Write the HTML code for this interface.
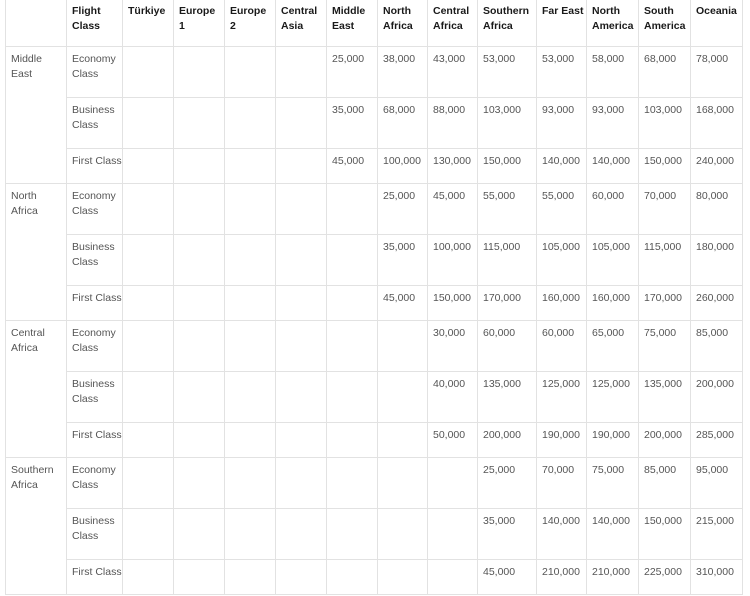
<!DOCTYPE html>
<html><head><style>
body{margin:0;background:#fff;width:750px;height:596px;overflow:hidden;}
table{position:absolute;left:5px;top:-1px;border-collapse:collapse;table-layout:fixed;font-family:"Liberation Sans",sans-serif;font-size:10.5px;line-height:15px;color:#555;}
td,th{border:1px solid #e2e2e2;vertical-align:top;text-align:left;padding:5px 0 0 5px;overflow:hidden;white-space:nowrap;}
th{color:#1a1a1a;font-weight:bold;height:42px;padding-top:4px;}
tr.r1 td,tr.r2 td{height:45px}
tr.r3 td{height:29px}
td.rg{height:auto}
</style></head><body>
<table>
<colgroup><col style="width:61px"><col style="width:56px"><col style="width:51px"><col style="width:51px"><col style="width:51px"><col style="width:51px"><col style="width:51px"><col style="width:50px"><col style="width:50px"><col style="width:59px"><col style="width:50px"><col style="width:52px"><col style="width:52px"><col style="width:52px"></colgroup>
<tr><th></th><th>Flight<br>Class</th><th>Türkiye</th><th>Europe<br>1</th><th>Europe<br>2</th><th>Central<br>Asia</th><th>Middle<br>East</th><th>North<br>Africa</th><th>Central<br>Africa</th><th>Southern<br>Africa</th><th>Far East</th><th>North<br>America</th><th>South<br>America</th><th>Oceania</th></tr>
<tr class="r1"><td rowspan="3" class="rg">Middle<br>East</td><td>Economy<br>Class</td><td></td><td></td><td></td><td></td><td>25,000</td><td>38,000</td><td>43,000</td><td>53,000</td><td>53,000</td><td>58,000</td><td>68,000</td><td>78,000</td></tr>
<tr class="r2"><td>Business<br>Class</td><td></td><td></td><td></td><td></td><td>35,000</td><td>68,000</td><td>88,000</td><td>103,000</td><td>93,000</td><td>93,000</td><td>103,000</td><td>168,000</td></tr>
<tr class="r3"><td>First Class</td><td></td><td></td><td></td><td></td><td>45,000</td><td>100,000</td><td>130,000</td><td>150,000</td><td>140,000</td><td>140,000</td><td>150,000</td><td>240,000</td></tr>
<tr class="r1"><td rowspan="3" class="rg">North<br>Africa</td><td>Economy<br>Class</td><td></td><td></td><td></td><td></td><td></td><td>25,000</td><td>45,000</td><td>55,000</td><td>55,000</td><td>60,000</td><td>70,000</td><td>80,000</td></tr>
<tr class="r2"><td>Business<br>Class</td><td></td><td></td><td></td><td></td><td></td><td>35,000</td><td>100,000</td><td>115,000</td><td>105,000</td><td>105,000</td><td>115,000</td><td>180,000</td></tr>
<tr class="r3"><td>First Class</td><td></td><td></td><td></td><td></td><td></td><td>45,000</td><td>150,000</td><td>170,000</td><td>160,000</td><td>160,000</td><td>170,000</td><td>260,000</td></tr>
<tr class="r1"><td rowspan="3" class="rg">Central<br>Africa</td><td>Economy<br>Class</td><td></td><td></td><td></td><td></td><td></td><td></td><td>30,000</td><td>60,000</td><td>60,000</td><td>65,000</td><td>75,000</td><td>85,000</td></tr>
<tr class="r2"><td>Business<br>Class</td><td></td><td></td><td></td><td></td><td></td><td></td><td>40,000</td><td>135,000</td><td>125,000</td><td>125,000</td><td>135,000</td><td>200,000</td></tr>
<tr class="r3"><td>First Class</td><td></td><td></td><td></td><td></td><td></td><td></td><td>50,000</td><td>200,000</td><td>190,000</td><td>190,000</td><td>200,000</td><td>285,000</td></tr>
<tr class="r1"><td rowspan="3" class="rg">Southern<br>Africa</td><td>Economy<br>Class</td><td></td><td></td><td></td><td></td><td></td><td></td><td></td><td>25,000</td><td>70,000</td><td>75,000</td><td>85,000</td><td>95,000</td></tr>
<tr class="r2"><td>Business<br>Class</td><td></td><td></td><td></td><td></td><td></td><td></td><td></td><td>35,000</td><td>140,000</td><td>140,000</td><td>150,000</td><td>215,000</td></tr>
<tr class="r3"><td>First Class</td><td></td><td></td><td></td><td></td><td></td><td></td><td></td><td>45,000</td><td>210,000</td><td>210,000</td><td>225,000</td><td>310,000</td></tr>
</table>
</body></html>
